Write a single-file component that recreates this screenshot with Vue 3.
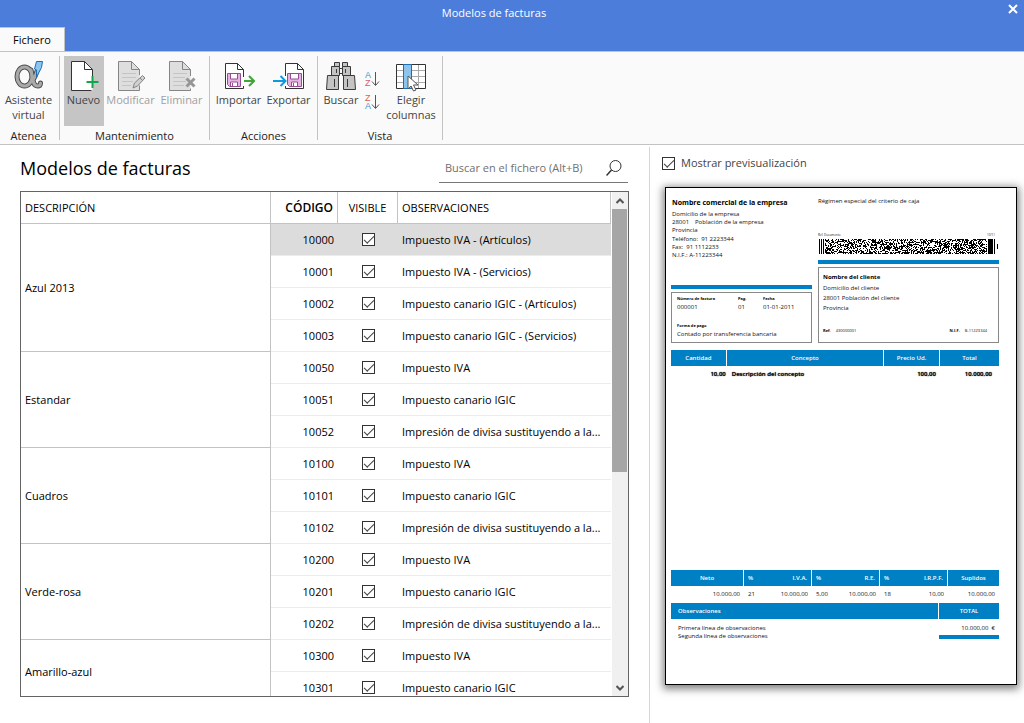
<script setup>
import { ref } from 'vue'

const groups = ref([
  { name: 'Azul 2013', rows: [
    { code: '10000', note: 'Impuesto IVA - (Artículos)', visible: true },
    { code: '10001', note: 'Impuesto IVA - (Servicios)', visible: true },
    { code: '10002', note: 'Impuesto canario IGIC - (Artículos)', visible: true },
    { code: '10003', note: 'Impuesto canario IGIC - (Servicios)', visible: true }
  ] },
  { name: 'Estandar', rows: [
    { code: '10050', note: 'Impuesto IVA', visible: true },
    { code: '10051', note: 'Impuesto canario IGIC', visible: true },
    { code: '10052', note: 'Impresión de divisa sustituyendo a la...', visible: true }
  ] },
  { name: 'Cuadros', rows: [
    { code: '10100', note: 'Impuesto IVA', visible: true },
    { code: '10101', note: 'Impuesto canario IGIC', visible: true },
    { code: '10102', note: 'Impresión de divisa sustituyendo a la...', visible: true }
  ] },
  { name: 'Verde-rosa', rows: [
    { code: '10200', note: 'Impuesto IVA', visible: true },
    { code: '10201', note: 'Impuesto canario IGIC', visible: true },
    { code: '10202', note: 'Impresión de divisa sustituyendo a la...', visible: true }
  ] },
  { name: 'Amarillo-azul', rows: [
    { code: '10300', note: 'Impuesto IVA', visible: true },
    { code: '10301', note: 'Impuesto canario IGIC', visible: true }
  ] }
])
const selected = ref('10000')
const preview = ref(true)
const query = ref('')

// Two-dimensional barcode: start and stop bars with a seeded module pattern between them
function barcodePath(cols, rows) {
  let seed = 20131
  let d = `M0 0h1v${rows}h-1zM2 0h1v${rows}h-1zM4 0h1v${rows}h-1z`
  for (let y = 0; y < rows; y++) {
    for (let x = 6; x < cols - 11; x++) {
      seed = (seed * 48271) % 2147483647
      if (seed / 2147483647 < 0.52) d += `M${x} ${y}h1v1h-1z`
    }
  }
  return d + `M${cols - 10} 0h5v${rows}h-5zM${cols - 4} 0h1v${rows}h-1zM${cols - 1} 5h1v5h-1z`
}
const barcode = barcodePath(179, 15)
</script>

<template>
  <div class="window">
    <header class="titlebar">
      <h1>Modelos de facturas</h1>
      <button class="close" aria-label="Cerrar">
        <svg width="10" height="10" viewBox="0 0 10 10"><path d="M1 1l8 8M9 1l-8 8" stroke="#fff" stroke-width="2" /></svg>
      </button>
      <button class="tab">Fichero</button>
    </header>

    <nav class="ribbon">
      <section class="group g-atenea">
        <div class="tools">
          <button class="tool wide">
            <svg width="32" height="32" viewBox="0 0 32 32" fill="none">
              <g stroke-linecap="round" stroke="#4d4d4d">
                <ellipse cx="11.500" cy="16.500" rx="7.500" ry="9.500" stroke-width="5" />
                <path d="M24 11C23 15 21 19 19 22M18 10C20 17 19 26 24.500 26Q27.500 26 27.500 23" stroke-width="5" />
              </g>
              <g stroke-linecap="round" stroke="#a9a9a9">
                <ellipse cx="11.500" cy="16.500" rx="7.500" ry="9.500" stroke-width="3" />
                <path d="M24 11C23 15 21 19 19 22M18 10C20 17 19 26 24.500 26Q27.500 26 27.500 23" stroke-width="3" />
              </g>
              <path d="M23.500 1.500h6l-1 6-5 9.500v-7l-2-1z" fill="#8ec5ee" stroke="#1c6fb5" />
            </svg>
            <span>Asistente<br>virtual</span>
          </button>
        </div>
        <h2>Atenea</h2>
      </section>

      <section class="group g-mant">
        <div class="tools">
          <button class="tool new active">
            <svg width="32" height="32" viewBox="0 0 32 32" fill="none">
              <path d="M3.500 1.500h13l8 8v21h-21z" fill="#fff" />
              <path d="M24.500 17V9.500l-8-8h-13v29h20M16.500 1.500v8h8" stroke="#333" />
              <path d="M24.500 16v12M18.500 22h12" stroke="#13a54a" stroke-width="2" />
            </svg>
            <span>Nuevo</span>
          </button>
          <button class="tool edit" disabled>
            <svg width="32" height="32" viewBox="0 0 32 32" fill="none">
              <path d="M3.500 1.500h13l8 8v21h-21z" fill="#dedede" />
              <path d="M24.500 15V9.500l-8-8h-13v29h21v-5M16.500 1.500v8h8" stroke="#858585" />
              <path d="M7 13.500h14M7 17.500h14M7 21.500h11M7 25.500h9" stroke="#c4c4c4" />
              <path d="M18 28l1.500-5 8-7.500 2.500 2.500-7.500 8z" fill="#d0d0d0" stroke="#858585" />
              <path d="M25 18l2.500 2.500" stroke="#858585" />
            </svg>
            <span>Modificar</span>
          </button>
          <button class="tool del" disabled>
            <svg width="32" height="32" viewBox="0 0 32 32" fill="none">
              <path d="M3.500 1.500h13l8 8v21h-21z" fill="#dedede" />
              <path d="M24.500 16V9.500l-8-8h-13v29h21v-2M16.500 1.500v8h8" stroke="#858585" />
              <path d="M7 13.500h14M7 17.500h12M7 21.500h13M7 25.500h11" stroke="#c4c4c4" />
              <path d="M20.500 18.500l8 8M28.500 18.500l-8 8" stroke="#969696" stroke-width="3" />
            </svg>
            <span>Eliminar</span>
          </button>
        </div>
        <h2>Mantenimiento</h2>
      </section>

      <section class="group g-acc">
        <div class="tools">
          <button class="tool io">
            <svg width="32" height="32" viewBox="0 0 32 32" fill="none">
              <path d="M20.500 17V9.500l-6-6h-12v25h18V26M14.500 3.500v6h6" fill="#fff" stroke="#333" />
              <path d="M4.500 13.500h13v13h-11l-2-2z" fill="#e3b5e0" stroke="#984c96" />
              <path d="M7.500 14v5h7v-5" fill="#fff" stroke="#984c96" />
              <path d="M7.500 26v-4h7v4M9.500 23v3" fill="#fff" stroke="#984c96" />
              <path d="M21 21h10M26 16l5 5-5 5" stroke="#3fa535" stroke-width="2" />
            </svg>
            <span>Importar</span>
          </button>
          <button class="tool io">
            <svg width="32" height="32" viewBox="0 0 32 32" fill="none">
              <path d="M12.500 16V3.500h12l6 6v19h-18V26M24.500 3.500v6h6" fill="#fff" stroke="#333" />
              <path d="M14.500 13.500h14v13h-12l-2-2z" fill="#e3b5e0" stroke="#984c96" />
              <path d="M17.500 14v5h8v-5" fill="#fff" stroke="#984c96" />
              <path d="M18.500 26v-4h6v4M20.500 23v3" fill="#fff" stroke="#984c96" />
              <path d="M0 21h12M7.500 16l5 5-5 5" stroke="#0c9be0" stroke-width="2" />
            </svg>
            <span>Exportar</span>
          </button>
        </div>
        <h2>Acciones</h2>
      </section>

      <section class="group g-vista">
        <div class="tools">
          <button class="tool find">
            <svg width="32" height="32" viewBox="0 0 32 32" fill="#c4c4c4" stroke="#3a3a3a">
              <path d="M14 8.500h4v5h-4z" fill="#fafafa" />
              <path d="M9.500 2.500h5v4h-5zM17.500 2.500h5v4h-5z" />
              <path d="M6.500 6.500h8v9h-8zM17.500 6.500h8v9h-8z" />
              <path d="M2.500 15.500h11v14h-12zM18.500 15.500h11l1 14h-12z" />
              <path d="M11.500 9v4M20.500 9v4M9.500 19v8M22.500 19v8" stroke-width="1" />
            </svg>
            <span>Buscar</span>
          </button>
          <div class="sorts">
            <button aria-label="Orden ascendente">
              <svg width="16" height="18" viewBox="0 0 16 18">
                <text x="1" y="8" fill="#3d94cf">A</text><text x="1" y="16" fill="#e05a5a">Z</text>
                <path d="M11.500 2v13M8 11.500l3.500 4 3.500-4" fill="none" stroke="#555" />
              </svg>
            </button>
            <button aria-label="Orden descendente">
              <svg width="16" height="18" viewBox="0 0 16 18">
                <text x="1" y="8" fill="#e05a5a">Z</text><text x="1" y="16" fill="#3d94cf">A</text>
                <path d="M11.500 2v13M8 11.500l3.500 4 3.500-4" fill="none" stroke="#555" />
              </svg>
            </button>
          </div>
          <button class="tool cols">
            <svg width="32" height="32" viewBox="0 0 32 32" fill="none">
              <path d="M1.500 4.500h29v24h-29z" fill="#fff" />
              <path d="M1 10.500h30M1 16.500h30M1 22.500h30M16.500 4v25M23.500 4v25" stroke="#aaa" />
              <path d="M1.500 4.500h29v24h-29z" stroke="#333" />
              <path d="M8.500 4.500h8v24h-8z" fill="#8cc4ec" stroke="#1c6fb5" />
              <path d="M13 16v13l3-3 2.500 5 2.500-1-2.500-5h4.500z" fill="#fff" stroke="#555" />
            </svg>
            <span>Elegir<br>columnas</span>
          </button>
        </div>
        <h2>Vista</h2>
      </section>
    </nav>

    <main class="content">
      <section class="list">
        <div class="list-head">
          <h2>Modelos de facturas</h2>
          <label class="search">
            <input v-model="query" type="text" placeholder="Buscar en el fichero (Alt+B)" aria-label="Buscar en el fichero">
            <svg width="16" height="18" viewBox="0 0 16 18" fill="none" stroke="#333"><circle cx="9.500" cy="7" r="5.500" /><path d="M5.500 11L.5 16.500" stroke-width="1.500" /></svg>
          </label>
        </div>
        <div class="grid">
          <div class="table-area">
            <table>
              <colgroup><col class="c-desc"><col class="c-code"><col class="c-vis"><col></colgroup>
              <thead>
                <tr><th>DESCRIPCIÓN</th><th class="code strong">CÓDIGO</th><th class="vis">VISIBLE</th><th>OBSERVACIONES</th></tr>
              </thead>
              <tbody v-for="g in groups" :key="g.name">
                <tr v-for="(r, i) in g.rows" :key="r.code" :class="{ sel: r.code === selected }" @click="selected = r.code">
                  <td v-if="i === 0" :rowspan="g.rows.length" class="desc">{{ g.name }}</td>
                  <td class="code">{{ r.code }}</td>
                  <td class="vis"><input v-model="r.visible" type="checkbox" class="check" :aria-label="'Visible ' + r.code"></td>
                  <td>{{ r.note }}</td>
                </tr>
              </tbody>
            </table>
          </div>
          <div class="scroll">
            <button aria-label="Subir"><svg width="8" height="6" viewBox="0 0 8 6"><path d="M.5 5L4 1.500 7.500 5" fill="none" stroke="#555" stroke-width="2" /></svg></button>
            <div class="track"><div class="thumb"></div></div>
            <button aria-label="Bajar"><svg width="8" height="6" viewBox="0 0 8 6"><path d="M.5 1L4 4.500 7.500 1" fill="none" stroke="#555" stroke-width="2" /></svg></button>
          </div>
        </div>
      </section>

      <aside class="side">
        <label class="toggle"><input v-model="preview" type="checkbox" class="check"> Mostrar previsualización</label>
        <article v-show="preview" class="paper">
          <div class="top">
            <div class="col-left">
              <div class="company">
                <h3>Nombre comercial de la empresa</h3>
                <p>Domicilio de la empresa<br><span class="zip">28001</span>Población de la empresa<br>Provincia</p>
                <p>Teléfono:&nbsp; 91 2223344<br>Fax:&nbsp; 91 1112233<br>N.I.F.: A-11223344</p>
              </div>
              <div class="bar"></div>
              <div class="box invoice">
                <div class="trio">
                  <div><b>Número de factura</b>000001</div>
                  <div><b>Pag.</b>01</div>
                  <div><b>Fecha</b>01-01-2011</div>
                </div>
                <div><b>Forma de pago</b>Contado por transferencia bancaria</div>
              </div>
            </div>
            <div class="col-right">
              <p class="regime">Régimen especial del criterio de caja</p>
              <div class="codes"><span>Ref. Documento</span><span>10/11</span></div>
              <svg class="barcode" width="179" height="15" viewBox="0 0 179 15" shape-rendering="crispEdges"><path :d="barcode" /></svg>
              <div class="bar"></div>
              <div class="box client">
                <h4>Nombre del cliente</h4>
                <p>Domicilio del cliente<br>28001 Población del cliente<br>Provincia</p>
                <div class="refs"><span><b>Ref.</b> 430000001</span><span><b>N.I.F.</b> B-11223344</span></div>
              </div>
            </div>
          </div>

          <table class="lines">
            <colgroup><col class="w-qty"><col><col class="w-price"><col class="w-total"></colgroup>
            <thead><tr><th>Cantidad</th><th>Concepto</th><th>Precio Ud.</th><th>Total</th></tr></thead>
            <tbody><tr><td class="num">10,00</td><td>Descripción del concepto</td><td class="num">100,00</td><td class="num last">10.000,00</td></tr></tbody>
          </table>

          <table class="totals">
            <colgroup><col class="w-neto"><col class="w-tax"><col class="w-tax"><col class="w-tax"><col class="w-sup"></colgroup>
            <thead>
              <tr><th>Neto</th><th><div class="pair"><span>%</span><span>I.V.A.</span></div></th><th><div class="pair"><span>%</span><span>R.E.</span></div></th><th><div class="pair"><span>%</span><span>I.R.P.F.</span></div></th><th>Suplidos</th></tr>
            </thead>
            <tbody>
              <tr><td class="num">10.000,00</td><td><div class="pair"><span>21</span><span>10.000,00</span></div></td><td><div class="pair"><span>5,00</span><span>10.000,00</span></div></td><td><div class="pair"><span>18</span><span>10,00</span></div></td><td class="num">10.000,00</td></tr>
            </tbody>
          </table>

          <div class="foot">
            <div class="obs"><h5>Observaciones</h5><p>Primera línea de observaciones<br>Segunda línea de observaciones</p></div>
            <div class="sum"><h5>TOTAL</h5><p>10.000,00 &nbsp;€</p><div class="bar"></div></div>
          </div>
        </article>
      </aside>
    </main>
  </div>
</template>

<style>
html, body { margin: 0; }
body { background: #fff; }
</style>

<style scoped>
* { box-sizing: border-box; }
.window { display: flex; flex-direction: column; height: 100vh; min-height: 600px; overflow: hidden; background: #fff; color: #000; font: 11px/16px "Open Sans", "Noto Sans", sans-serif; }
h1, h2, h3, h4, h5, p { margin: 0; font: inherit; }
button { padding: 0; border: 0; background: none; color: inherit; font: inherit; }
svg { display: block; flex: none; }

.titlebar { position: relative; display: flex; flex-direction: column; height: 52px; background: #4d7ddb; border-bottom: 1px solid #c3c3c3; }
.titlebar h1 { margin: 5px 36px 6px 0; text-align: center; color: #fff; }
.close { position: absolute; top: 4px; right: 6px; }
.tab { align-self: flex-start; width: 65px; height: 25px; border: 1px solid #c3c3c3; border-width: 1px 1px 0 0; background: #fafafa; color: #000; }

.ribbon { display: flex; height: 93px; padding: 4px 0; background: #fafafa; border-bottom: 1px solid #c3c3c3; }
.group { display: flex; flex-direction: column; align-items: center; border-right: 1px solid #c3c3c3; }
.group h2 { margin-top: 2px; line-height: 16px; color: #222; }
.tools { display: flex; align-items: flex-start; }
.g-atenea { width: 60px; padding-right: 2px; }
.g-mant { width: 150px; }
.g-acc { width: 108px; }
.g-vista { width: 125px; }
.tool { display: flex; flex-direction: column; align-items: center; height: 70px; padding-top: 4px; color: #444; line-height: 15px; text-align: center; }
.tool:disabled { color: #a0a0a0; }
.tool.active { background: #c5c5c5; }
.wide, .cols { width: 56px; }
.new, .find { width: 40px; }
.edit { width: 54px; }
.del { width: 48px; }
.io { width: 50px; }
.sorts { display: flex; flex-direction: column; gap: 5px; width: 22px; padding: 14px 3px 0; }
.sorts text { font: 9px "Liberation Sans", sans-serif; }

.content { flex: 1; display: grid; grid-template-columns: minmax(0, 650fr) minmax(0, 374fr); min-height: 0; padding-top: 2px; }
.list { display: flex; flex-direction: column; padding: 5px 20px 26px 20px; border-right: 1px solid #d5d5d5; min-height: 0; }
.list-head { display: flex; justify-content: space-between; align-items: center; height: 39px; padding-bottom: 7px; flex: none; }
.list-head h2 { font-size: 18px; line-height: 28px; }
.search { display: flex; align-items: center; width: 189px; height: 29px; margin-right: 1px; padding: 0 6px; border-bottom: 1px solid #777; }
.search input { flex: 1; min-width: 0; padding: 0; border: 0; outline: 0; background: none; font: inherit; }
.search input::placeholder { color: #707070; }
.grid { display: flex; flex: 1; min-height: 0; border: 1px solid #646464; }
.table-area { flex: 1; min-width: 0; overflow: hidden; }
.grid table { width: 100%; border-collapse: separate; border-spacing: 0; table-layout: fixed; }
.c-desc { width: 250px; }
.c-code { width: 67px; }
.c-vis { width: 60px; }
.grid th, .grid td { height: 32px; padding: 0 4px; border-bottom: 1px solid #ececec; font-weight: 400; text-align: left; white-space: nowrap; overflow: hidden; }
.grid th { border-right: 1px solid #c3c3c3; border-bottom-color: #c3c3c3; }
.grid td.desc { border-right: 1px solid #c3c3c3; border-bottom-color: #c3c3c3; background: #fff; }
.grid .code { text-align: right; }
.grid th.strong { font-size: 12px; font-weight: 600; }
.grid .vis { text-align: center; }
.grid .check { display: block; margin: 0 auto; }
.sel td { background: #dcdcdc; }
.check { appearance: none; position: relative; width: 13px; height: 13px; margin: 0; border: 1px solid #333; background: #fff; flex: none; }
.check:checked::before { content: ""; position: absolute; left: 1px; top: 2px; width: 9px; height: 4px; border: solid #444; border-width: 0 0 1px 1px; transform: rotate(-45deg); }
.scroll { display: flex; flex-direction: column; width: 17px; padding-left: 1px; }
.scroll button { display: grid; place-items: center; height: 17px; background: #f0f0f0; }
.track { flex: 1; background: #f0f0f0; }
.thumb { height: 56%; margin-right: 1px; background: #a6a6a6; }

.side { display: flex; flex-direction: column; padding: 7px 7px 38px 15px; min-height: 0; }
.toggle { display: flex; align-items: center; gap: 6px; height: 18px; margin: 0 0 15px -3px; color: #444; }
.paper { flex: 1; display: flex; flex-direction: column; padding: 8px 17px 0 5px; border: 1px solid #000; background: #fff; box-shadow: 0 2px 8px 2px rgba(0, 0, 0, .5); font: 6px/8px "Open Sans", sans-serif; color: #111; }
.top { display: grid; grid-template-columns: 141fr 181fr; gap: 6px; height: 147px; }
.col-left, .col-right { display: flex; flex-direction: column; min-width: 0; }
.company { flex: 1; padding: 2px 0 0 1px; white-space: nowrap; }
.company h3 { margin-bottom: 2px; font-size: 7px; line-height: 10px; font-weight: 700; color: #000; }
.company p + p { margin-top: 1px; }
.zip { display: inline-block; width: 23px; }
.bar { height: 4px; background: #0080c4; }
.box { margin-top: 3px; padding: 3px 4px; border: 1px solid #888; }
.box b { display: block; font-size: 4px; color: #000; }
.invoice { height: 51px; display: flex; flex-direction: column; justify-content: space-between; padding: 2px 5px 4px; white-space: nowrap; }
.trio { display: flex; }
.trio div:first-child { width: 61px; }
.trio div:nth-child(2) { width: 25px; }
.regime { margin-top: 1px; margin-bottom: 28px; }
.codes { display: flex; justify-content: space-between; padding-right: 4px; font-size: 3px; line-height: 4px; height: 6px; }
.barcode { margin-left: 1px; }
.col-right .bar { margin-top: 6px; }
.client { flex: 1; display: flex; flex-direction: column; line-height: 10px; padding-bottom: 6px; }
.client h4 { font-weight: 700; color: #000; line-height: 12px; }
.refs { display: flex; justify-content: space-between; margin-top: auto; padding-right: 7px; font-size: 4px; }
.refs b { display: inline; margin-right: 4px; }
.paper table { width: 100%; border-collapse: separate; border-spacing: 0; table-layout: fixed; }
.paper th { height: 16px; padding: 0 4px; background: #0080c4; color: #fff; font-weight: 600; border-right: 1px solid #fff; }
.paper th:last-child { border-right: 0; }
.paper td { height: 15px; padding: 0 4px; }
.paper .num { text-align: right; }
.lines { margin-top: 7px; }
.lines td { font-weight: 600; color: #000; text-shadow: 0 0 1px #000; }
.lines td:nth-child(1) { padding-right: 1px; }
.lines td:nth-child(2) { padding-left: 5px; }
.lines .last { padding-right: 7px; }
.w-qty { width: 17%; }
.w-price { width: 17%; }
.w-total { width: 18%; }
.totals { margin-top: auto; }
.w-neto { width: 73px; }
.w-tax { width: 68px; }
.pair { display: flex; justify-content: space-between; }
.foot { display: grid; grid-template-columns: 267fr 60fr; gap: 1px; height: 81px; margin-top: 2px; }
.foot h5 { height: 16px; line-height: 16px; background: #0080c4; color: #fff; font-weight: 600; }
.obs h5 { padding-left: 7px; }
.obs p { padding: 5px 7px; }
.sum h5 { text-align: center; }
.sum p { padding: 5px 4px 3px; text-align: right; }
</style>
